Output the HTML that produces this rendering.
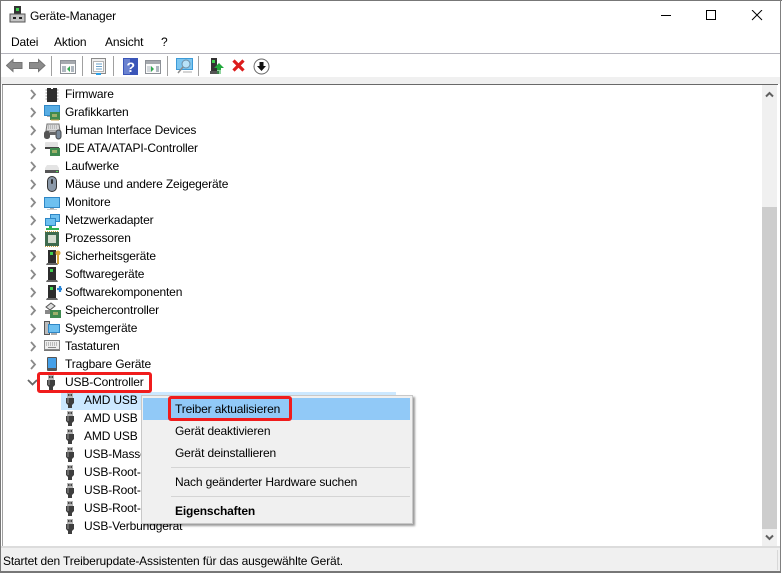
<!DOCTYPE html>
<html><head><meta charset="utf-8"><style>
html,body{margin:0;padding:0;background:#fff}
#w{position:relative;width:782px;height:573px;overflow:hidden;background:#fff;font:12px/16px "Liberation Sans",sans-serif;letter-spacing:-.15px;color:#000}
#w div,#w svg{position:absolute}
.t{white-space:nowrap}
.r{height:16px;white-space:nowrap}
.sep{width:1px;height:20px;top:56px;background:#a0a0a0}
</style></head><body><div id="w">
<svg width="0" height="0" style="position:absolute"><defs>
<g id="ch"><path d="M1 1l4 4.500-4 4.500" fill="none" stroke="#8a8a8a" stroke-width="1.800"/></g>
<g id="usb"><rect x="1" y="0" width="6" height="5" fill="#b4b4b4"/><rect x="2" y="1" width="1.500" height="2" fill="#444"/><rect x="4.500" y="1" width="1.500" height="2" fill="#444"/><path d="M0 5h8v5l-2 2v3H2v-3L0 10z" fill="#3e3e3e"/><rect x="1" y="5" width="2" height="5" fill="#6a6a6a"/></g>
<g id="srv"><path d="M2 0h8v13H2z" fill="#2c2c2c"/><rect x="4" y="2" width="3" height="3" fill="#3fd04f"/><path d="M1 13h10l1 2H0z" fill="#666"/></g>
</defs></svg>

<!-- window frame -->
<div style="left:0;top:0;width:782px;height:1px;background:#777"></div>
<div style="left:0;top:0;width:1px;height:572px;background:#777"></div>
<div style="left:780px;top:0;width:1px;height:572px;background:#808080"></div>
<div style="left:0;top:571px;width:781px;height:2px;background:#777"></div>

<!-- title -->
<svg style="left:9px;top:6px" width="18" height="18"><rect x="5" y="0" width="7" height="8" fill="#333"/><rect x="7" y="2" width="3" height="3" fill="#3fd04f"/><rect x="1" y="8" width="15" height="8" fill="#c4c4c4" stroke="#555"/><rect x="4" y="11" width="3" height="2" fill="#222"/><rect x="10" y="11" width="3" height="2" fill="#222"/></svg>
<div class="t" style="left:30px;top:8px">Geräte-Manager</div>
<svg style="left:660px;top:10px" width="110" height="12" fill="none" stroke="#000"><path d="M1 5.500h10"/><rect x="46.500" y=".5" width="9" height="9"/><path d="M92 0l10 10M102 0l-10 10"/></svg>

<!-- menu -->
<div class="t" style="left:11px;top:34px">Datei</div>
<div class="t" style="left:54px;top:34px">Aktion</div>
<div class="t" style="left:105px;top:34px">Ansicht</div>
<div class="t" style="left:161px;top:34px">?</div>
<div style="left:1px;top:53px;width:779px;height:1px;background:#b4b4bc"></div>

<!-- toolbar -->
<svg style="left:6px;top:58px" width="40" height="15"><path d="M.5 7.500l6.500-6v3h9v6H7v3z" fill="#8c8c8c" stroke="#757575"/><path d="M39 7.500l-6.500-6v3h-9v6h9v3z" fill="#8c8c8c" stroke="#757575"/></svg>
<div class="sep" style="left:51px"></div>
<svg style="left:60px;top:60px" width="17" height="15"><rect x=".5" y=".5" width="15" height="13" fill="#fbfbfb" stroke="#8c9096"/><rect x="1" y="1" width="14" height="3" fill="#a5a9ae"/><rect x="2" y="6" width="4" height="6" fill="#aeb7bf"/><rect x="11" y="6" width="3" height="6" fill="#aeb7bf"/><path d="M10 6v6l-3-3z" fill="#31a84f"/></svg>
<div class="sep" style="left:82px"></div>
<svg style="left:91px;top:58px" width="16" height="18"><rect x=".5" y=".5" width="14" height="15" fill="#eee" stroke="#8a8a8a"/><rect x="2.500" y="3.500" width="10" height="10" fill="#fff" stroke="#b4b4b4"/><path d="M5 6h6M5 8.500h6M5 11h6" stroke="#6aa0c8"/><rect x="5" y="15" width="5" height="2" fill="#2aa0e8"/></svg>
<div class="sep" style="left:113px"></div>
<svg style="left:123px;top:58px" width="15" height="17"><rect width="15" height="17" fill="#3a55b8"/><rect x="1" y="1" width="6" height="15" fill="#6a82d0"/><text x="3.500" y="14" font-family="Liberation Sans" font-weight="bold" font-size="14" fill="#fff">?</text></svg>
<svg style="left:145px;top:60px" width="17" height="15"><rect x=".5" y=".5" width="15" height="13" fill="#fbfbfb" stroke="#8c9096"/><rect x="1" y="1" width="14" height="3" fill="#a5a9ae"/><rect x="2" y="6" width="4" height="6" fill="#d4d9dd"/><rect x="11" y="6" width="3" height="6" fill="#aeb7bf"/><path d="M6 6v6l3-3z" fill="#31a84f"/></svg>
<div class="sep" style="left:167px"></div>
<svg style="left:176px;top:58px" width="17" height="17"><rect x=".5" y=".5" width="16" height="11" fill="#7cc6f0" stroke="#3d9bd8"/><circle cx="10" cy="6" r="4" fill="#b8e2f8" stroke="#6f8fa8"/><path d="M7 9l-5 6" stroke="#8a8a8a" stroke-width="1.500"/><path d="M7 14h9" stroke="#aaa"/></svg>
<div class="sep" style="left:198px"></div>
<svg style="left:210px;top:58px" width="14" height="17"><rect x="1" y="0" width="6" height="13" fill="#333"/><rect x="2" y="2" width="3" height="3" fill="#3fd04f"/><rect x="0" y="13" width="9" height="3" fill="#555"/><path d="M9 5l5 5h-3v2H7v-2H4z" fill="#21a83c"/><path d="M7 13h4M7 15h4" stroke="#21a83c"/></svg>
<svg style="left:232px;top:59px" width="13" height="13"><path d="M1.500 1.500l10 10M11.500 1.500l-10 10" stroke="#dc1c1c" stroke-width="3.200"/></svg>
<svg style="left:253px;top:58px" width="17" height="17"><circle cx="8.500" cy="8.500" r="7.500" fill="#fff" stroke="#666"/><path d="M6.500 4h4v4h2.500l-4.500 5-4.500-5h2.500z" fill="#111"/></svg>

<!-- strip above tree -->
<div style="left:1px;top:77px;width:779px;height:7px;background:#f0f0f0"></div>
<div style="left:2px;top:84px;width:776px;height:1px;background:#696969"></div>
<div style="left:2px;top:85px;width:1px;height:461px;background:#a0a0a0"></div>

<!-- scrollbar -->
<div style="left:762px;top:85px;width:15px;height:461px;background:#f0f0f0"></div>
<div style="left:762px;top:207px;width:15px;height:322px;background:#cdcdcd"></div>
<svg style="left:765px;top:91px" width="9" height="7"><path d="M1 5.500l3.500-3.500 3.500 3.500" fill="none" stroke="#606060" stroke-width="2"/></svg>
<svg style="left:765px;top:534px" width="9" height="7"><path d="M1 1.500l3.500 3.500 3.500-3.500" fill="none" stroke="#606060" stroke-width="2"/></svg>

<!-- tree chevrons -->
<svg style="left:30px;top:86px" width="8" height="300">
<use href="#ch" y="3"/><use href="#ch" y="21"/><use href="#ch" y="39"/><use href="#ch" y="57"/><use href="#ch" y="75"/><use href="#ch" y="93"/><use href="#ch" y="111"/><use href="#ch" y="129"/><use href="#ch" y="147"/><use href="#ch" y="165"/><use href="#ch" y="183"/><use href="#ch" y="201"/><use href="#ch" y="219"/><use href="#ch" y="237"/><use href="#ch" y="255"/><use href="#ch" y="273"/>
</svg>
<svg style="left:27px;top:378px" width="12" height="9"><path d="M1 2l4.500 4.500L10 2" fill="none" stroke="#666" stroke-width="1.800"/></svg>

<!-- tree icons -->
<svg style="left:44px;top:86px" width="18" height="300">
<!-- Firmware -->
<path d="M3 2h4v1h2V2h4v14H3z" fill="#2e2e2e"/><path d="M1.500 4h1.500M1.500 7h1.500M1.500 10h1.500M1.500 13h1.500M13 4h1.500M13 7h1.500M13 10h1.500M13 13h1.500" stroke="#999"/>
<!-- Grafik -->
<g transform="translate(0,19)"><rect x=".5" y=".5" width="15" height="10" fill="#58ade4" stroke="#2f87c6"/><rect x="3" y="11" width="6" height="1" fill="#aaa"/><rect x="6" y="7" width="10" height="8" fill="#3f8a4f"/><rect x="8" y="9" width="5" height="3" fill="#9db06a"/><path d="M7 15h8" stroke="#c9a24a"/></g>
<!-- HID -->
<g transform="translate(0,37)"><path d="M3 1h12l1 7H2z" fill="#dcdcdc" stroke="#777"/><path d="M4 3h10M4 5h10" stroke="#999" stroke-dasharray="1 1"/><rect x="0" y="8" width="6" height="8" rx="2.500" fill="#555"/><rect x="12" y="7" width="5" height="9" rx="2.500" fill="#7a8a9a" stroke="#444"/><rect x="6" y="9" width="6" height="3" fill="#666"/></g>
<!-- IDE -->
<g transform="translate(0,54)"><rect x="1" y="2" width="13" height="5" rx="1" fill="#e2e2e2"/><rect x="1" y="7" width="14" height="2" fill="#444"/><rect x="6" y="8" width="10" height="8" fill="#3f8a4f"/><rect x="8" y="10" width="5" height="3" fill="#9db06a"/></g>
<!-- Laufwerke -->
<g transform="translate(0,72)"><path d="M3 7h10l2 3v3H1v-3z" fill="#e4e4e4"/><rect x="1" y="12" width="14" height="3" fill="#555"/><rect x="12" y="13" width="2" height="1" fill="#5d5"/></g>
<!-- Maus -->
<g transform="translate(1,90)"><rect x="2.500" y=".5" width="9" height="15" rx="4.500" fill="#8a98a8" stroke="#333"/><rect x="6" y="3" width="2" height="5" rx="1" fill="#333"/></g>
<!-- Monitor -->
<g transform="translate(0,111)"><rect x=".5" y=".5" width="15" height="10" fill="#6dc0f0" stroke="#2f87c6"/><rect x="6" y="11" width="4" height="1" fill="#aaa"/><rect x="3" y="12" width="10" height="1" fill="#c8c8c8"/></g>
<!-- Netzwerk -->
<g transform="translate(0,128)"><rect x="6.500" y=".5" width="9" height="7" fill="#6dc0f0" stroke="#2f87c6"/><rect x="1.500" y="4.500" width="10" height="7" fill="#6dc0f0" stroke="#2f87c6"/><rect x="2" y="14" width="13" height="2" fill="#30b050"/><rect x="5" y="12" width="3" height="3" fill="#30b050"/></g>
<!-- Prozessor -->
<g transform="translate(0,145)"><rect x="1" y="1" width="14" height="14" fill="#3e6b4e"/><rect x="4" y="4" width="8" height="8" fill="#d4dccf"/><path d="M1 .5h14M1 15.500h14" stroke="#c8a040" stroke-dasharray="1 1"/></g>
<!-- Sicherheit -->
<g transform="translate(2,164)"><use href="#srv"/><circle cx="12" cy="3" r="2.500" fill="#d8a83c"/><rect x="11" y="5" width="2" height="9" fill="#d8a83c"/></g>
<!-- Software -->
<g transform="translate(2,181)"><use href="#srv"/></g>
<!-- Softwarekomp -->
<g transform="translate(2,199)"><use href="#srv"/><path d="M11 4h6M14 1v6" stroke="#2a86d8" stroke-width="2.200"/></g>
<!-- Speicher -->
<g transform="translate(0,216)"><path d="M2 5l5-4 4 3-5 4z" fill="#ddd" stroke="#555"/><rect x="1" y="8" width="6" height="4" fill="#888"/><rect x="6" y="8" width="11" height="8" fill="#3f8a4f"/><rect x="9" y="10" width="5" height="3" fill="#9db06a"/></g>
<!-- System -->
<g transform="translate(0,235)"><rect x=".5" y=".5" width="5" height="13" fill="#bbb" stroke="#555"/><rect x="4.500" y="3.500" width="11" height="8" fill="#6dc0f0" stroke="#2f87c6"/><rect x="7" y="12" width="6" height="2" fill="#aaa"/></g>
<!-- Tastatur -->
<g transform="translate(0,252)"><rect x=".5" y="2.500" width="15" height="9" fill="#eee" stroke="#888"/><path d="M2 5h12M2 7h12" stroke="#888" stroke-dasharray="1 1"/><path d="M4 9.500h8" stroke="#888"/><rect x="0" y="12" width="16" height="1" fill="#777"/></g>
<!-- Tragbar -->
<g transform="translate(0,271)"><rect x="3" y="0" width="10" height="14" rx="1" fill="#555"/><rect x="4" y="1" width="8" height="10" fill="#45a0e8"/></g>
</svg>
<svg style="left:47px;top:375px" width="9" height="16"><use href="#usb"/></svg>

<!-- tree text -->
<div class="r" style="left:65px;top:86px">Firmware</div>
<div class="r" style="left:65px;top:104px">Grafikkarten</div>
<div class="r" style="left:65px;top:122px">Human Interface Devices</div>
<div class="r" style="left:65px;top:140px">IDE ATA/ATAPI-Controller</div>
<div class="r" style="left:65px;top:158px">Laufwerke</div>
<div class="r" style="left:65px;top:176px">Mäuse und andere Zeigegeräte</div>
<div class="r" style="left:65px;top:194px">Monitore</div>
<div class="r" style="left:65px;top:212px">Netzwerkadapter</div>
<div class="r" style="left:65px;top:230px">Prozessoren</div>
<div class="r" style="left:65px;top:248px">Sicherheitsgeräte</div>
<div class="r" style="left:65px;top:266px">Softwaregeräte</div>
<div class="r" style="left:65px;top:284px">Softwarekomponenten</div>
<div class="r" style="left:65px;top:302px">Speichercontroller</div>
<div class="r" style="left:65px;top:320px">Systemgeräte</div>
<div class="r" style="left:65px;top:338px">Tastaturen</div>
<div class="r" style="left:65px;top:356px">Tragbare Geräte</div>
<div class="r" style="left:65px;top:374px">USB-Controller</div>

<!-- USB children -->
<div style="left:61px;top:392px;width:335px;height:18px;background:#cce8ff"></div>
<svg style="left:66px;top:392px" width="9" height="144"><use href="#usb" y="1"/><use href="#usb" y="19"/><use href="#usb" y="37"/><use href="#usb" y="55"/><use href="#usb" y="73"/><use href="#usb" y="91"/><use href="#usb" y="109"/><use href="#usb" y="127"/></svg>
<div class="r" style="left:84px;top:392px">AMD USB 3.10</div>
<div class="r" style="left:84px;top:410px">AMD USB 3.10</div>
<div class="r" style="left:84px;top:428px">AMD USB 3.10</div>
<div class="r" style="left:84px;top:446px">USB-Massenspeicher</div>
<div class="r" style="left:84px;top:464px">USB-Root-Hub</div>
<div class="r" style="left:84px;top:482px">USB-Root-Hub</div>
<div class="r" style="left:84px;top:500px">USB-Root-Hub</div>
<div class="r" style="left:84px;top:518px">USB-Verbundgerät</div>

<!-- USB red box -->
<div style="left:37px;top:372px;width:109px;height:15px;border:3px solid #f01c1c;border-radius:3px"></div>

<!-- context menu -->
<div style="left:141px;top:395px;width:270px;height:127px;background:#f0f0f0;border:1px solid #c8c8c8;box-shadow:2px 2px 2px rgba(0,0,0,.4)"></div>
<div style="left:143px;top:398px;width:267px;height:22px;background:#91c9f7"></div>
<div class="t" style="left:175px;top:401px">Treiber aktualisieren</div>
<div class="t" style="left:175px;top:423px">Gerät deaktivieren</div>
<div class="t" style="left:175px;top:445px">Gerät deinstallieren</div>
<div style="left:171px;top:467px;width:239px;height:1px;background:#d4d4d4"></div>
<div class="t" style="left:175px;top:474px">Nach geänderter Hardware suchen</div>
<div style="left:171px;top:496px;width:239px;height:1px;background:#d4d4d4"></div>
<div class="t" style="left:175px;top:503px;font-weight:bold">Eigenschaften</div>
<div style="left:168px;top:396px;width:118px;height:19px;border:3px solid #f01c1c;border-radius:3px"></div>

<!-- status bar -->
<div style="left:1px;top:546px;width:779px;height:2px;background:#dcdcdc"></div>
<div style="left:1px;top:548px;width:779px;height:23px;background:#f0f0f0"></div>
<div style="left:777px;top:550px;width:1px;height:20px;background:#d8d8d8"></div>
<div class="t" style="left:3px;top:553px">Startet den Treiberupdate-Assistenten für das ausgewählte Gerät.</div>
</div></body></html>
